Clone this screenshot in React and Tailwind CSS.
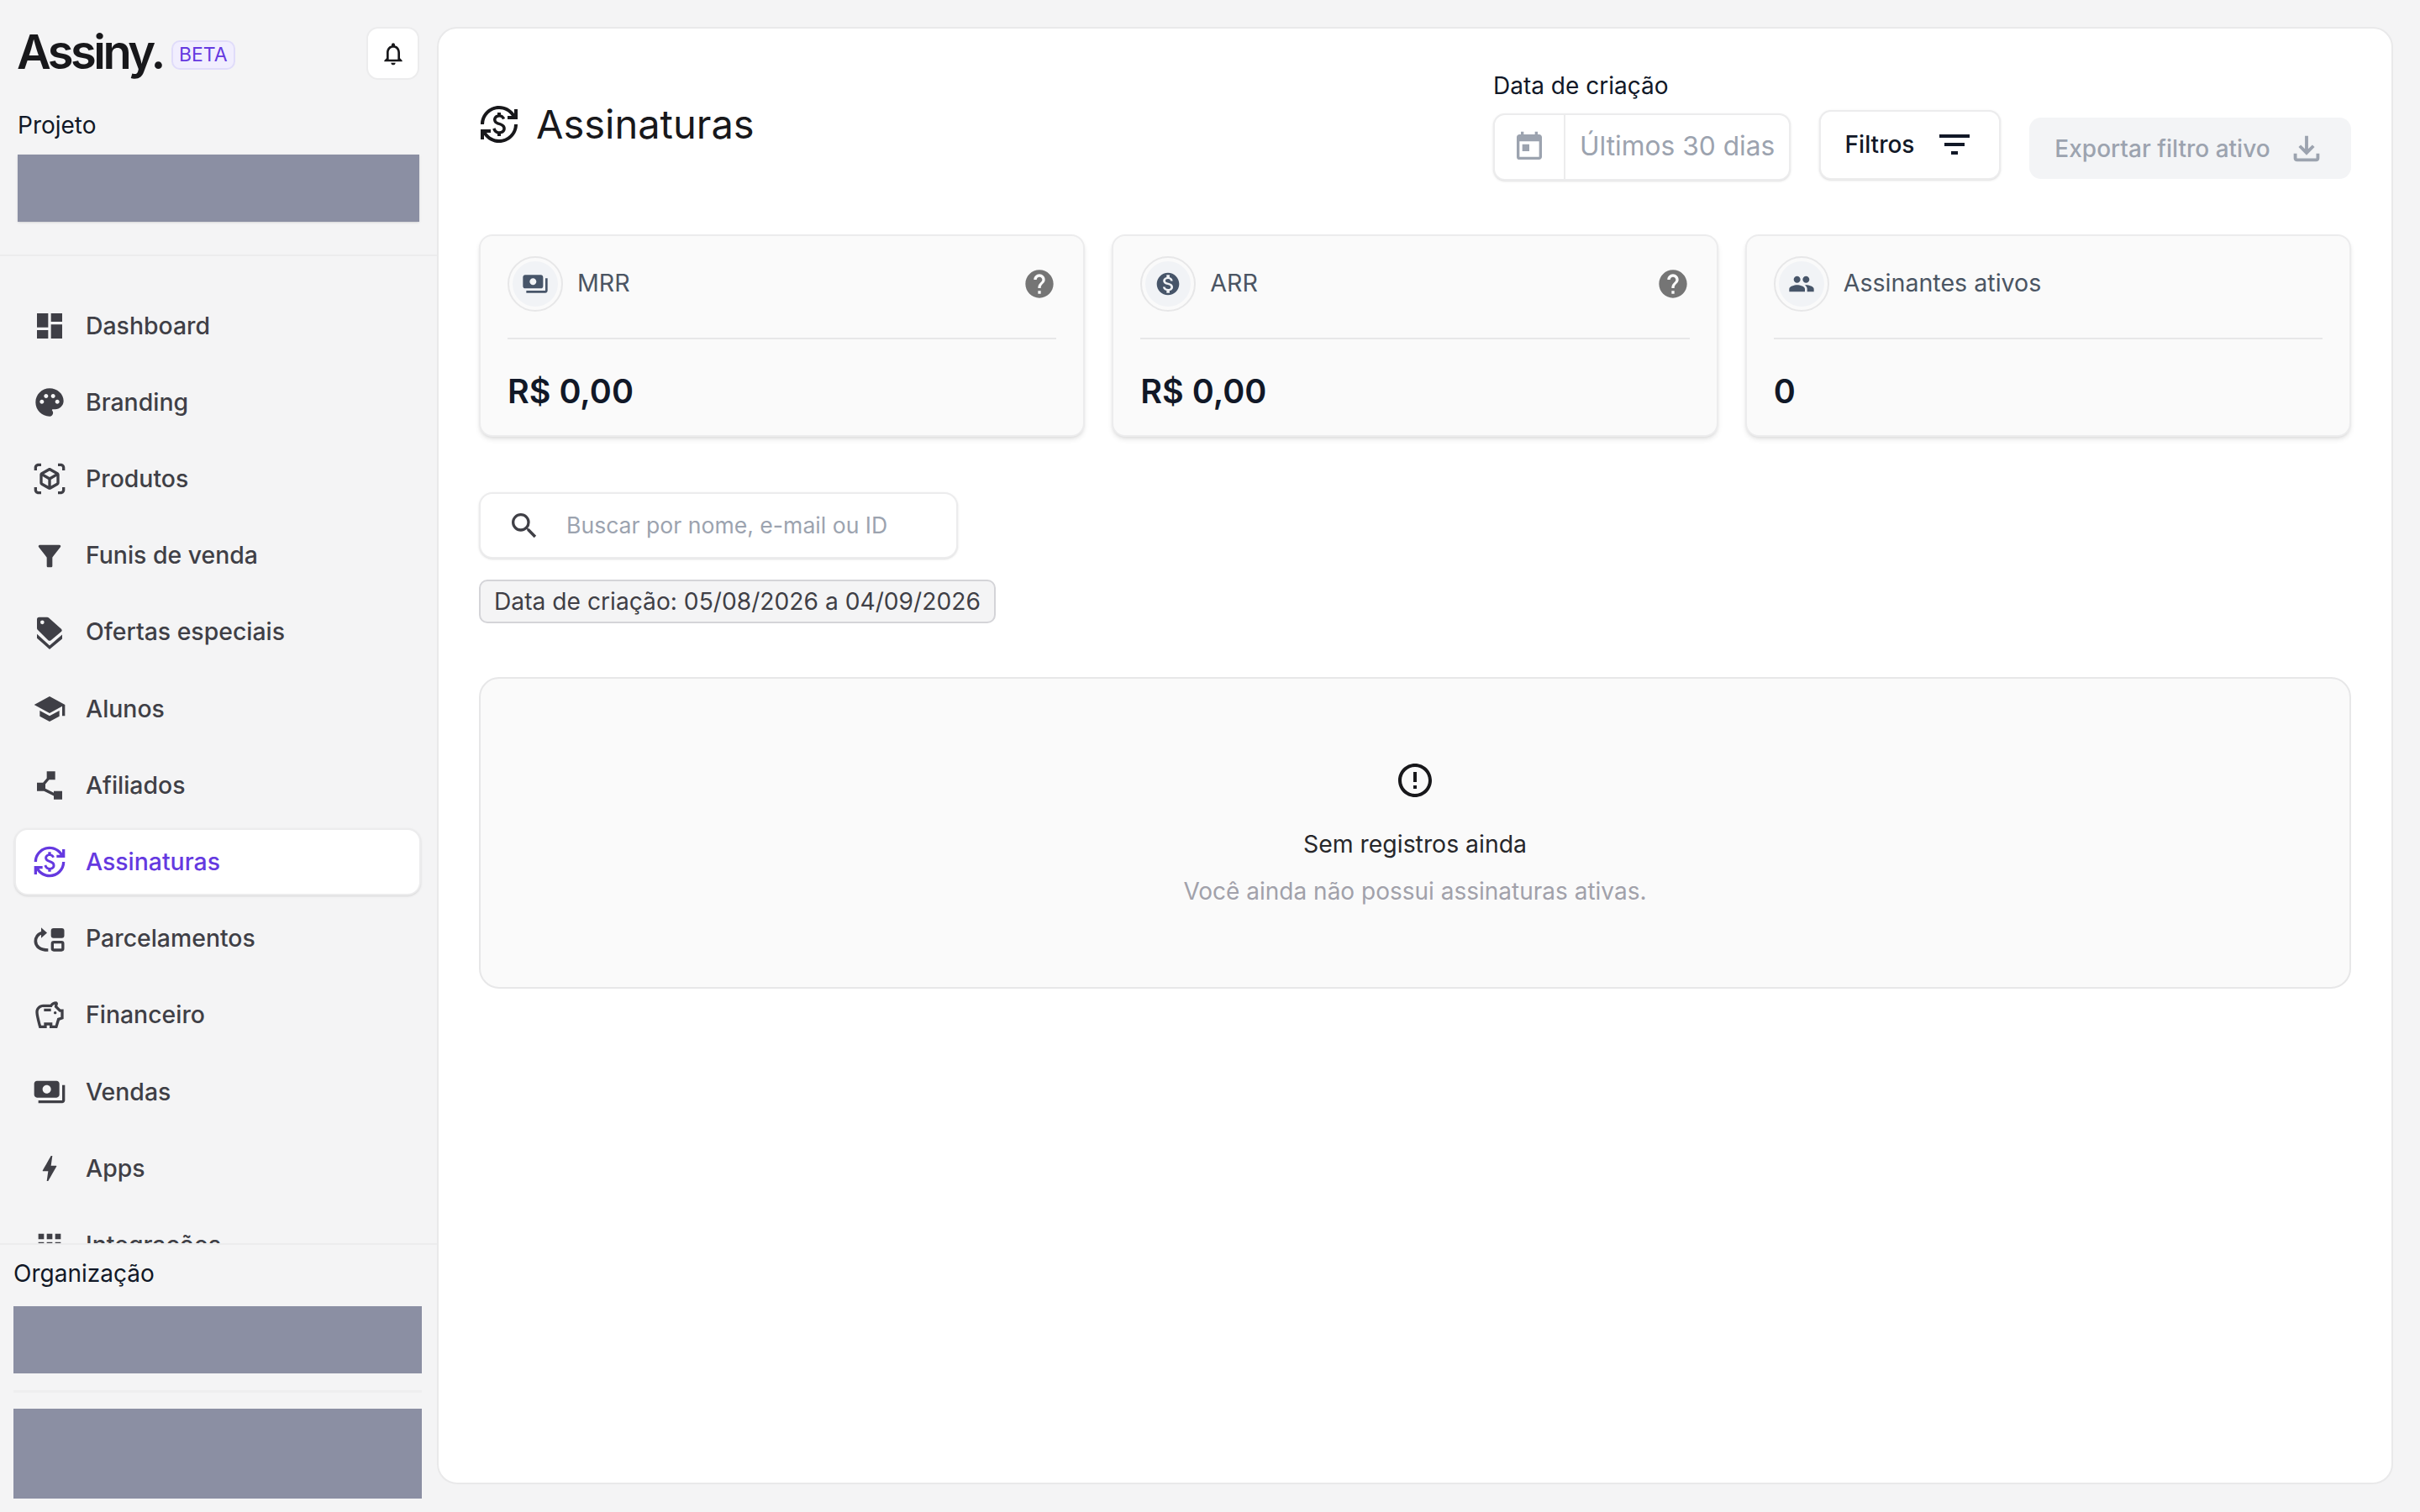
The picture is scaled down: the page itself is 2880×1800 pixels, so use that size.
import {
    MdDashboard, MdPalette, MdOutlineViewInAr, MdFilterAlt, MdSchool, MdPolyline, MdCurrencyExchange,
    MdOutlineSavings, MdPayments, MdBolt, MdApps, MdOutlineNotifications, MdToday, MdFilterList,
    MdOutlineFileDownload, MdHelp, MdMonetizationOn, MdPeople, MdSearch, MdErrorOutline,
} from "react-icons/md";

const OffersIcon = ({ className }) => (
    <svg viewBox="0 0 24 24" fill="currentColor" className={className}>
        <path fillRule="evenodd" d="M3 2.500Q3 1 4.500 1H10.200Q11 1 11.600 1.600L20.500 9.600Q21.200 10.500 20.500 11.200L13 17.500Q12 18.300 11 17.500L3.600 10.200Q3 9.600 3 9ZM6.800 3.300a1.400 1.400 0 1 0 0 2.800a1.400 1.400 0 1 0 0-2.800Z" />
        <path d="M3 13L12 21.300L21 13.500V16.500L12 24L3 16Z" />
    </svg>
);

const InstallmentsIcon = ({ className }) => (
    <svg viewBox="0 0 24 24" fill="currentColor" className={className}>
        <rect x="13" y="4.200" width="9.500" height="7" rx="1.800" />
        <rect x="14" y="14.200" width="7.500" height="5.600" rx="1" fill="none" stroke="currentColor" strokeWidth="2" />
        <path d="M7 7.500C3.500 8 2 11 2 13.500C2 17 5 19.800 11 19.800" fill="none" stroke="currentColor" strokeWidth="2.200" />
        <path d="M6 3.800L10.200 7.500L6 11.200Z" />
    </svg>
);

const navItems = [
    { label: "Dashboard", icon: MdDashboard },
    { label: "Branding", icon: MdPalette },
    { label: "Produtos", icon: MdOutlineViewInAr },
    { label: "Funis de venda", icon: MdFilterAlt },
    { label: "Ofertas especiais", icon: OffersIcon },
    { label: "Alunos", icon: MdSchool },
    { label: "Afiliados", icon: MdPolyline },
    { label: "Assinaturas", icon: MdCurrencyExchange, active: true },
    { label: "Parcelamentos", icon: InstallmentsIcon },
    { label: "Financeiro", icon: MdOutlineSavings },
    { label: "Vendas", icon: MdPayments },
    { label: "Apps", icon: MdBolt },
    { label: "Integrações", icon: MdApps },
];

const stats = [
    { label: "MRR", value: "R$ 0,00", icon: MdPayments, help: true },
    { label: "ARR", value: "R$ 0,00", icon: MdMonetizationOn, help: true },
    { label: "Assinantes ativos", value: "0", icon: MdPeople },
];

const Sidebar = () => (
    <aside className="w-[520px] h-full shrink-0 flex flex-col">
        <div className="shrink-0 h-[305px] border-b-2 border-[#ececed] px-[21px] pt-[32px]">
            <div className="flex items-center justify-between">
                <div className="flex items-center gap-[10px] -ml-[1px]">
                    <span className="-mt-[2px] text-[56px] leading-[63px] font-semibold tracking-[-3.500px] text-[#18181b]">Assiny.</span>
                    <span className="mt-[4px] h-[35px] px-[7px] flex items-center rounded-[10px] border-2 border-[#e0dcfa] bg-[#f1eefe] text-[23px] text-[#6539e0]">BETA</span>
                </div>
                <button className="w-[63px] h-[63px] flex items-center justify-center rounded-[14px] border-2 border-[#ececed] bg-white text-[#18181b]">
                    <MdOutlineNotifications className="w-[32px] h-[32px]" />
                </button>
            </div>
            <p className="mt-[34px] text-[28px] leading-[40px] text-[#111827]">Projeto</p>
            <div className="mt-[15px] h-[80px] bg-[#8b8fa3] shadow-sm"></div>
        </div>

        <nav className="flex-1 min-h-0 overflow-hidden pl-[17px] pr-[19px] pt-[43px] flex flex-col gap-[11.200px]">
            {navItems.map((item) => (
                <a
                    key={item.label}
                    href="#"
                    className={`shrink-0 h-[80px] px-[20px] flex items-center gap-[23px] rounded-[16px] border-2 text-[28.400px] font-medium ${
                        item.active
                            ? "bg-white border-[#ececed] text-[#6539e0] shadow-sm"
                            : "border-transparent text-[#3f3f46]"
                    }`}
                >
                    <item.icon className="w-[40px] h-[40px] shrink-0" />
                    {item.label}
                </a>
            ))}
        </nav>

        <div className="shrink-0 h-[320px] border-t-2 border-[#ececed] bg-[#f4f4f5] pl-[16px] pr-[18px] pt-[14px]">
            <p className="text-[28px] leading-[40px] text-[#111827]">Organização</p>
            <div className="mt-[19px] h-[80px] bg-[#8b8fa3]"></div>
            <div className="mt-[20px] h-[3px] bg-[#eeeeef]"></div>
            <div className="mt-[19px] h-[107px] bg-[#8b8fa3]"></div>
        </div>
    </aside>
);

const StatCard = ({ stat }) => (
    <div className="h-[241px] rounded-[16px] border-2 border-[#ececed] bg-[#fafafa] shadow-md px-[32px] pt-[23px]">
        <div className="h-[100px] pb-[31px] flex items-center justify-between border-b-2 border-[#e7e7e8]">
            <div className="flex items-center gap-[17px]">
                <span className="w-[66px] h-[66px] rounded-full border-2 border-[#e7e7e8] p-[4px]">
                    <span className="w-full h-full rounded-full bg-[#f1f3f6] flex items-center justify-center text-[#475569]">
                        <stat.icon className="w-[32px] h-[32px]" />
                    </span>
                </span>
                <span className="text-[28.600px] text-[#4b5563]">{stat.label}</span>
            </div>
            {stat.help && <MdHelp className="w-[40px] h-[40px] text-[#757575]" />}
        </div>
        <p className="mt-[36px] text-[39.500px] leading-[52px] font-semibold text-[#111827]">{stat.value}</p>
    </div>
);

const App = () => {
    return (
        <div className="w-[2880px] h-[1800px] overflow-hidden flex bg-[#f4f4f5] font-[Inter,sans-serif]">
            <Sidebar />
            <main className="flex-1 mt-[32px] mb-[33px] mr-[32px] rounded-[24px] border-2 border-[#e9e9ea] bg-white px-[48px]">
                <div className="h-[245px] flex items-start justify-between">
                    <div className="flex items-center gap-[20px] mt-[86px]">
                        <MdCurrencyExchange className="w-[48px] h-[48px] text-[#18181b]" />
                        <h1 className="text-[47px] leading-[56px] text-[#18181b]">Assinaturas</h1>
                    </div>
                    <div className="flex items-end gap-[34px] mt-[48px]">
                        <div>
                            <p className="text-[28px] leading-[40px] text-[#111827]">Data de criação</p>
                            <div className="mt-[13px] w-[354px] h-[80px] flex rounded-[14px] border-2 border-[#ececed] bg-white shadow-sm">
                                <span className="w-[84px] flex items-center justify-center border-r-2 border-[#ececed] text-[#9ca3af]">
                                    <MdToday className="w-[40px] h-[40px]" />
                                </span>
                                <span className="pl-[17px] pb-[2px] flex items-center text-[31.700px] text-[#9ca3af]">Últimos 30 dias</span>
                            </div>
                        </div>
                        <button className="mb-[1px] w-[216px] h-[83px] pb-[2px] flex items-center justify-center gap-[24px] rounded-[14px] border-2 border-[#ececed] bg-white shadow-sm text-[28px] font-medium text-[#111827]">
                            Filtros
                            <MdFilterList className="w-[48px] h-[48px]" />
                        </button>
                        <button className="mb-[2px] w-[383px] h-[73px] flex items-center justify-center gap-[20px] rounded-[14px] bg-[#f3f4f6] text-[28px] font-medium text-[#9ca3af]">
                            Exportar filtro ativo
                            <MdOutlineFileDownload className="w-[46px] h-[46px]" />
                        </button>
                    </div>
                </div>

                <div className="grid grid-cols-3 gap-[32px]">
                    {stats.map((stat) => (
                        <StatCard key={stat.label} stat={stat} />
                    ))}
                </div>

                <div className="mt-[66px] w-[570px] h-[79px] flex items-center gap-[30px] pl-[32px] rounded-[16px] border-2 border-[#ececed] bg-white shadow-sm">
                    <MdSearch className="w-[40px] h-[40px] text-[#3f3f46]" />
                    <span className="text-[26.600px] text-[#9ca3af]">Buscar por nome, e-mail ou ID</span>
                </div>

                <div className="mt-[25px] w-fit h-[52px] flex items-center px-[16px] rounded-[10px] border-2 border-[#d4d4d8] bg-[#f4f4f5] text-[28.200px] text-[#3f3f46]">
                    Data de criação: 05/08/2026 a 04/09/2026
                </div>

                <div className="mt-[64px] h-[371px] rounded-[24px] border-2 border-[#e7e7e8] bg-[#fafafa] flex flex-col items-center pt-[97px]">
                    <MdErrorOutline className="w-[48px] h-[48px] text-[#18181b]" />
                    <p className="mt-[32px] text-[28.400px] leading-[40px] text-[#27272a]">Sem registros ainda</p>
                    <p className="mt-[16px] text-[28px] leading-[40px] text-[#a1a1aa]">Você ainda não possui assinaturas ativas.</p>
                </div>
            </main>
        </div>
    );
};

export default App;
